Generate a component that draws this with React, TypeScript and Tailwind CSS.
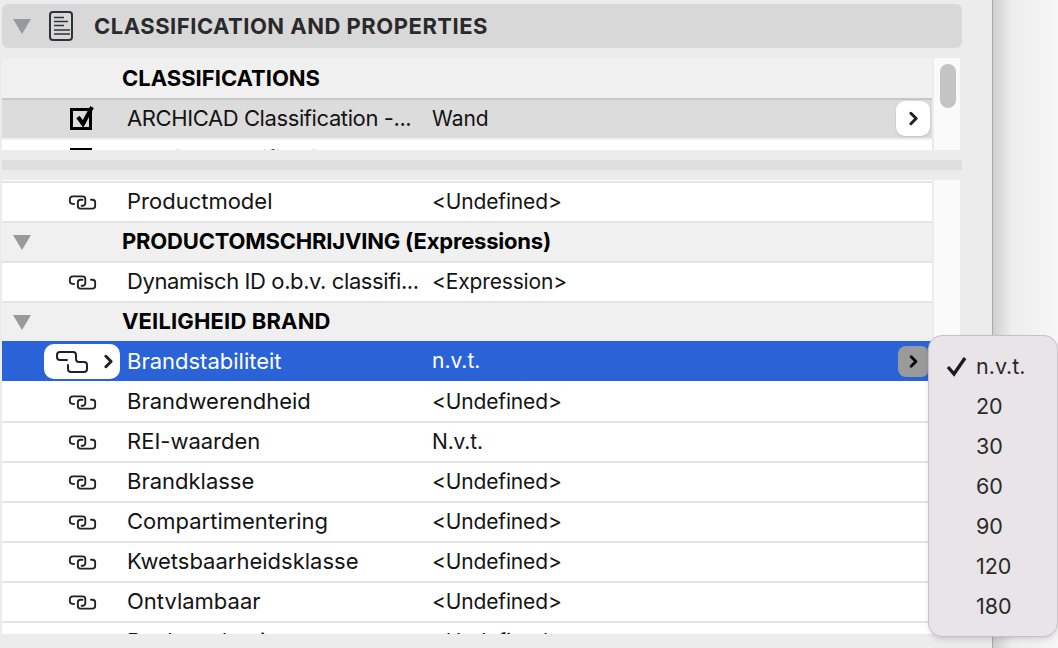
import React from 'react';
import { ChevronRight } from 'lucide-react';

const sans = 'font-["Inter","Liberation_Sans",sans-serif]';

function LinkIcon() {
  return (
    <svg width="29" height="15" viewBox="0 0 30 16" fill="none" stroke="#222" strokeWidth="2" strokeLinecap="round">
      <path d="M6 9.5H4.5a3 3 0 0 1-3-3v-2a3 3 0 0 1 3-3H15a3 3 0 0 1 3 3V9a3 3 0 0 1-3 2.5h-1" />
      <path d="M24 5h1.5a3 3 0 0 1 3 3v3.5a3 3 0 0 1-3 3H13a3 3 0 0 1-3-3V8a3 3 0 0 1 3-3h2" />
    </svg>
  );
}

function Caret() {
  return <div className="w-0 h-0 border-x-[9px] border-x-transparent border-t-[15px] border-t-[#979a9a]" />;
}

function CheckBox() {
  return (
    <div className="relative w-[22px] h-[22px] border-[3px] border-black">
      <svg className="absolute -top-[8px] -left-[1px]" width="26" height="26" viewBox="0 0 26 26" fill="none">
        <path d="M6 14l5 7L20 4" stroke="#000" strokeWidth="4" />
      </svg>
    </div>
  );
}

function Row({ name, value, tight }: { name: string; value: string; tight?: boolean }) {
  return (
    <div className="flex items-center h-[40px] shrink-0 bg-white border-b-2 border-[#e4e4e4]">
      <div className="w-[66px]" />
      <div className="w-[59px]"><LinkIcon /></div>
      <div className={`w-[305px] text-[22px] pb-[2px] truncate ${tight ? 'tracking-[-0.4px]' : ''}`}>{name}</div>
      <div className="tracking-[-0.15px]">{value}</div>
    </div>
  );
}

function Group({ title, squeeze }: { title: string; squeeze?: boolean }) {
  return (
    <div className="flex items-center h-[40px] shrink-0 bg-[#f0f0f0] border-b-2 border-[#e4e4e4]">
      <div className="w-[120px] pl-[11px]"><Caret /></div>
      <div className={`font-bold text-[22px] pb-[2px] text-black ${squeeze ? 'tracking-[-0.2px]' : 'tracking-[0.15px]'}`}>{title}</div>
    </div>
  );
}

const rowsAfter = [
  ['Brandwerendheid', '<Undefined>'],
  ['REI-waarden', 'N.v.t.'],
  ['Brandklasse', '<Undefined>'],
  ['Compartimentering', '<Undefined>'],
  ['Kwetsbaarheidsklasse', '<Undefined>'],
  ['Ontvlambaar', '<Undefined>'],
  ['Rookproductie', '<Undefined>'],
];

const options = ['n.v.t.', '20', '30', '60', '90', '120', '180'];

export default function App() {
  return (
    <div className={`relative flex w-[1058px] h-[648px] overflow-hidden text-[21px] text-[#141414] ${sans}`}>
      <div className="w-[993px] shrink-0 h-full bg-[#ececec] border-r border-[#a9a9a9] pl-[2px] pt-[4px] pr-[30px] flex flex-col">
        <div className="flex items-center h-[44px] w-[960px] bg-[#d8d8d8] rounded-[6px] shrink-0">
          <div className="w-[47px] pl-[11px]"><Caret /></div>
          <svg width="24" height="30" viewBox="0 0 24 30" fill="none" stroke="#2c333a">
            <rect x="1" y="1" width="22" height="28" rx="3" strokeWidth="2" />
            <path d="M5 6.5h10M5 10.5h14M5 14.5h10M5 19h16M5 23h16" strokeWidth="1.6" />
          </svg>
          <div className="ml-[21px] font-bold text-[22px] tracking-[0.5px] text-[#2a2a2a]">CLASSIFICATION AND PROPERTIES</div>
        </div>

        <div className="flex mt-[10px] h-[92px] w-[958px] shrink-0">
          <div className="w-[930px] overflow-hidden bg-white">
            <div className="flex items-center h-[42px] bg-[#f0f0f0] border-b-2 border-[#c8c8c8]">
              <div className="w-[120px]" />
              <div className="font-bold text-[22px] text-black">CLASSIFICATIONS</div>
            </div>
            <div className="flex items-center h-[38px] bg-[#dcdcdc] relative">
              <div className="w-[68px]" />
              <div className="w-[57px]"><CheckBox /></div>
              <div className="w-[305px] text-[22px] pb-[2px] tracking-[-0.4px]">ARCHICAD Classification -...</div>
              <div>Wand</div>
              <div className="absolute right-[2px] top-[1px] w-[34px] h-[35px] bg-white rounded-[9px] shadow flex items-center justify-center">
                <ChevronRight size={21} strokeWidth={3.5} className="text-[#222]" />
              </div>
            </div>
            <div className="h-[2px] bg-[#f0f0f0]" />
            <div className="flex h-[40px] bg-white pt-[3px]">
              <div className="w-[68px]" />
              <div className="w-[57px]"><div className="w-[22px] h-[22px] mt-[5px] border-[3px] border-black" /></div>
              <div className="w-[305px]">Overige classificatie</div>
              <div>Onbekend</div>
            </div>
          </div>
          <div className="ml-[2px] w-[26px] bg-[#fafafa] pt-[6px] pl-[6px]">
            <div className="w-[16px] h-[44px] rounded-full bg-[#c4c4c4]" />
          </div>
        </div>

        <div className="mt-[10px] h-[10px] w-[960px] bg-[#dedede] shrink-0" />

        <div className="flex mt-[10px] h-[454px] w-[958px] shrink-0">
          <div className="w-[930px] overflow-hidden bg-white">
            <div className="h-[3px] bg-white border-b-2 border-[#e4e4e4]" />
            <Row name="Productmodel" value="<Undefined>" />
            <Group title="PRODUCTOMSCHRIJVING (Expressions)" squeeze />
            <Row name="Dynamisch ID o.b.v. classifi..." value="<Expression>" tight />
            <Group title="VEILIGHEID BRAND" />
            <div className="flex items-center h-[40px] -mt-[2px] mb-[2px] bg-[#2a63d8] text-white relative">
              <div className="absolute left-[42px] top-[3px] w-[76px] h-[35px] bg-white rounded-[10px] flex items-center pl-[12px]">
                <svg width="32" height="22" viewBox="0 0 32 22" fill="none" stroke="#222" strokeWidth="2" strokeLinecap="round">
                  <path d="M11 9H4a3 3 0 0 1-3-3V4a3 3 0 0 1 3-3h13a3 3 0 0 1 3 3v4a3 3 0 0 0 3 3h5a3 3 0 0 1 3 3v4a3 3 0 0 1-3 3H15a3 3 0 0 1-3-3v-4" />
                </svg>
                <ChevronRight size={21} strokeWidth={3.5} className="ml-[10px] text-[#222]" />
              </div>
              <div className="w-[125px]" />
              <div className="w-[305px] text-[22px]">Brandstabiliteit</div>
              <div>n.v.t.</div>
              <div className="absolute right-[3px] top-[5px] w-[31px] h-[31px] bg-[#9a9a9a] rounded-[8px] flex items-center justify-center">
                <ChevronRight size={19} strokeWidth={3.5} className="text-black" />
              </div>
            </div>
            {rowsAfter.map(([n, v]) => <Row key={n} name={n} value={v} />)}
          </div>
          <div className="ml-[2px] w-[26px] bg-[#fafafa]" />
        </div>
      </div>
      <div className="flex-1 h-full bg-gradient-to-r from-[#cfcfcf] via-[#eeeeee] via-30% to-[#f6f6f6]" />

      <div className="absolute left-[928px] top-[335px] w-[130px] h-[302px] bg-[#e8e4e7] rounded-[14px] border border-[#c4c2c4] shadow-md pt-[10px]">
        {options.map((o, i) => (
          <div key={o} className="relative flex items-center h-[40px] pl-[47px] text-[21.5px] text-[#2a2a2a]">
            {i === 0 && (
              <svg className="absolute left-[17px] top-[9px]" width="22" height="22" viewBox="0 0 22 22" fill="none">
                <path d="M2 12l6 7L19 3" stroke="#1c1c1c" strokeWidth="3.4" />
              </svg>
            )}
            {o}
          </div>
        ))}
      </div>
    </div>
  );
}
